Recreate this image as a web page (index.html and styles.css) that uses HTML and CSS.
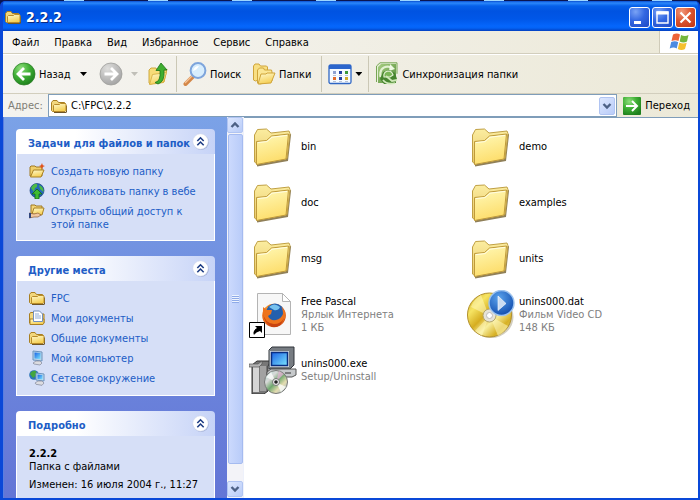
FILE: index.html
```html
<!DOCTYPE html>
<html lang="ru">
<head>
<meta charset="utf-8">
<title>2.2.2</title>
<link rel="stylesheet" href="styles.css">
</head>
<body>
<svg class="defs" aria-hidden="true">
  <defs>
    <linearGradient id="gFolder" x1="0" y1="0" x2="0.4" y2="1"><stop offset="0" stop-color="#fffbd0"/><stop offset="1" stop-color="#f5cf55"/></linearGradient>
    <linearGradient id="gBigFront" x1="0.2" y1="0" x2="0.5" y2="1"><stop offset="0" stop-color="#fff8b4"/><stop offset="1" stop-color="#fddc68"/></linearGradient>
    <linearGradient id="gBigBack" x1="0" y1="0" x2="0" y2="1"><stop offset="0" stop-color="#fbeda0"/><stop offset="1" stop-color="#e9c766"/></linearGradient>
    <radialGradient id="gGreen" cx="0.35" cy="0.25" r="0.8"><stop offset="0" stop-color="#8fdf7c"/><stop offset="0.5" stop-color="#3faf35"/><stop offset="1" stop-color="#1d7f1c"/></radialGradient>
    <radialGradient id="gGrey" cx="0.35" cy="0.25" r="0.8"><stop offset="0" stop-color="#dededc"/><stop offset="1" stop-color="#a3a3a3"/></radialGradient>
    <linearGradient id="gScreen" x1="0" y1="0" x2="1" y2="1"><stop offset="0" stop-color="#1c62e4"/><stop offset="1" stop-color="#7be6ff"/></linearGradient>
    <linearGradient id="gGold" x1="0" y1="0" x2="1" y2="1"><stop offset="0" stop-color="#cda51a"/><stop offset="0.25" stop-color="#f6e463"/><stop offset="0.45" stop-color="#d6ad20"/><stop offset="0.6" stop-color="#f8efa0"/><stop offset="0.78" stop-color="#d7b125"/><stop offset="1" stop-color="#efe27a"/></linearGradient>
    <radialGradient id="gPlay" cx="0.4" cy="0.3" r="0.7"><stop offset="0" stop-color="#5aa2ec"/><stop offset="1" stop-color="#1450b0"/></radialGradient>
    <linearGradient id="gDisc" x1="0" y1="0" x2="1" y2="1"><stop offset="0" stop-color="#a8e0d0"/><stop offset="0.3" stop-color="#d8d8d8"/><stop offset="0.5" stop-color="#6fa86e"/><stop offset="0.7" stop-color="#e4dcb0"/><stop offset="1" stop-color="#8fb6d0"/></linearGradient>
    <radialGradient id="gFox" cx="0.4" cy="0.3" r="0.8"><stop offset="0" stop-color="#ffb732"/><stop offset="0.6" stop-color="#ee6a1a"/><stop offset="1" stop-color="#b93208"/></radialGradient>
    <linearGradient id="gSync" x1="0" y1="0" x2="1" y2="1"><stop offset="0" stop-color="#a9cf84"/><stop offset="1" stop-color="#4f8a34"/></linearGradient>
  </defs>
  <symbol id="folder" viewBox="0 0 16 16">
    <path d="M3 14h12v-7l1 1v6l-1 1H3z" fill="#6d5528"/>
    <path d="M.5 12.500V4.500L2 2.500h4l1.500 2H13.500l1 1v7l-1 1h-12z" fill="#f2d77d" stroke="#a97f22"/>
    <path d="M2.500 13.500v-6l1-1h5l1-1h5l.5 1v6l-1 1z" fill="url(#gFolder)" stroke="#b88b2a"/>
  </symbol>
  <symbol id="big-folder" viewBox="0 0 48 48">
    <path d="M8 43.500l30-5.500L41 12" fill="none" stroke="#7d6a3c" stroke-width="2.200" opacity=".85"/>
    <path d="M5.500 40V13l3-5.500L17.500 7l4.500 4 18-2 1 2.500-3 25L8 42z" fill="url(#gBigBack)" stroke="#c0a044"/>
    <path d="M7.500 42.500v-23L17.500 18.500l5-4.500L39.500 12 37 37z" fill="url(#gBigFront)" stroke="#bf9a3a"/>
    <path d="M8.800 20.600l9.200-1 5-4.400 15-1.800" fill="none" stroke="#fffde4"/>
  </symbol>
  <symbol id="computer" viewBox="0 0 16 16">
    <path d="M4 1l9 1v9l-9-1z" fill="#b6d4ea" stroke="#6c93bd"/>
    <path d="M5.500 2.500l6 .6v6l-6-.6z" fill="url(#gScreen)"/>
    <path d="M7 11h4l2 2-2 2-6-1-1-1z" fill="#dcdce0" stroke="#8c91a3" stroke-width=".8"/>
  </symbol>
  <symbol id="chevrons" viewBox="0 0 16 16">
    <circle cx="8.500" cy="8.500" r="7.300" fill="#8f9fc9"/>
    <circle cx="8" cy="8" r="7.300" fill="#fff" stroke="#ccd4ec" stroke-width=".6"/>
    <path d="M5 7.500l3-3 3 3M5 11.500l3-3 3 3" fill="none" stroke="#1d3c84" stroke-width="1.500"/>
  </symbol>
  <symbol id="down" viewBox="0 0 10 10"><path d="M1.500 3L5 6.500 8.500 3" fill="none" stroke="#4d6185" stroke-width="2.400"/></symbol>
  <symbol id="up" viewBox="0 0 10 10"><path d="M1.500 7L5 3.500 8.500 7" fill="none" stroke="#4d6185" stroke-width="2.400"/></symbol>
</svg>

<div class="window">
  <header class="titlebar">
    <svg class="i16"><use href="#folder"/></svg>
    <h1>2.2.2</h1>
    <div class="controls">
      <button class="ctl" aria-label="Свернуть"><svg viewBox="0 0 19 19"><path d="M4 13h7v3H4z" fill="#fff"/></svg></button>
      <button class="ctl" aria-label="Развернуть"><svg viewBox="0 0 19 19"><path d="M4 4h11v11H4z" fill="none" stroke="#fff" stroke-width="1.400"/><path d="M3.500 3.500h12v3h-12z" fill="#fff"/></svg></button>
      <button class="ctl close" aria-label="Закрыть"><svg viewBox="0 0 19 19"><path d="M4.500 4.500l10 10M14.500 4.500l-10 10" stroke="#fff" stroke-width="2.200"/></svg></button>
    </div>
  </header>

  <nav class="menubar">
    <button>Файл</button><button>Правка</button><button>Вид</button><button>Избранное</button><button>Сервис</button><button>Справка</button>
    <span class="flag"><svg viewBox="0 0 20 18">
      <path d="M4 1.500q4-2 7 0L9.500 8q-3-1.500-7 0z" fill="#ec6337"/>
      <path d="M12 2q4 2 7.500 0L18 8.500q-3.500 1.800-7.300 0z" fill="#74b63c"/>
      <path d="M2.200 9q4-1.600 7 .2L7.700 15.500q-3-2-7 0z" fill="#4d8be0"/>
      <path d="M10.300 9.600q4 1.800 7.400.1L16 16q-3.500 2-7.200 0z" fill="#f5c02f"/></svg></span>
  </nav>

  <div class="toolbar">
    <button class="tool back">
      <svg class="i24" viewBox="0 0 24 24"><circle cx="12" cy="12" r="11" fill="url(#gGreen)" stroke="#2e8129" stroke-width=".8"/><path d="M18.500 12H7M12 6l-6 6 6 6" fill="none" stroke="#fff" stroke-width="2.800"/></svg>
      Назад
    </button>
    <span class="caret"></span>
    <button class="tool fwd" aria-label="Вперед">
      <svg class="i24" viewBox="0 0 24 24"><circle cx="12" cy="12" r="11" fill="url(#gGrey)" stroke="#a0a09c" stroke-width=".8"/><path d="M5.500 12H17M12 6l6 6-6 6" fill="none" stroke="#fff" stroke-width="2.800"/></svg>
    </button>
    <span class="caret off"></span>
    <button class="tool upper" aria-label="Вверх">
      <svg class="i24" viewBox="0 0 24 24"><path d="M3 21V8l2-2h5l1 2h9l1-1-3 13-14 2z" fill="#f7dc78" stroke="#c9a032" stroke-width=".9"/><path d="M3.500 22.500l3-10 14-2-3 10z" fill="url(#gFolder)" stroke="#d3ab3c" stroke-width=".8"/><path d="M9 20.500q6-1 5-12h-4L15 1l6 7h-3q1 12-6 14z" fill="#3fae30" stroke="#1c7319" stroke-width=".8"/></svg>
    </button>
    <span class="sep"></span>
    <button class="tool find">
      <svg class="i24" viewBox="0 0 24 24"><path d="M2.500 22l8-8" stroke="#d48748" stroke-width="4" stroke-linecap="round"/><path d="M2 21l8-8" stroke="#f5c396" stroke-width="1.200"/><circle cx="15" cy="8.500" r="7.400" fill="#d7edfd" stroke="#7ea5dc" stroke-width="2"/><path d="M10 9q1-5 6-5-2 4-6 5z" fill="#fff"/></svg>
      Поиск
    </button>
    <button class="tool folders">
      <svg class="i24" viewBox="0 0 24 24"><path d="M1.500 18V4l1.500-2h4l1.500 2h6l1 1v10l-12 4z" fill="#f8df83" stroke="#d0a53a"/><path d="M5.500 21V8l2-2h4l1 2h7l.5 2v9l-12 3z" fill="#fbe795" stroke="#d0a53a"/><path d="M6 22l3-10h5l1-1h8l-4 10z" fill="url(#gFolder)" stroke="#d0a53a"/></svg>
      Папки
    </button>
    <span class="sep"></span>
    <button class="tool view" aria-label="Вид папки">
      <svg class="i24" viewBox="0 0 24 24"><rect x="1" y="3" width="22" height="18.500" rx="1.500" fill="#f6fbff" stroke="#2e66c4" stroke-width="1.300"/><path d="M1 3h22v4H1z" fill="#2c66cc"/><path d="M5 9h3v3H5z" fill="#8fa2d0"/><path d="M11 9h3v3h-3zM11 15h3v3h-3z" fill="#2544a3"/><path d="M17 9h3v3h-3z" fill="#3a9939"/><path d="M5 15h3v3H5z" fill="#e36d2a"/><path d="M17 15h3v3h-3z" fill="#d1aa29"/><path d="M5 13.500h3M11 13.500h3M17 13.500h3M5 19.500h3M11 19.500h3M17 19.500h3" stroke="#a7b4cb" stroke-width=".8"/></svg>
      <span class="caret"></span>
    </button>
    <span class="sep"></span>
    <button class="tool sync">
      <svg class="i24" viewBox="0 0 24 24"><path d="M5 .8h17v11M1.500 20V4L5 .8" fill="#e3f0d5" stroke="#78a655"/><path d="M3 5l3-3h15v19H3z" fill="url(#gSync)"/><path d="M5.500 15Q4 5 13 4.500l3 1" fill="none" stroke="#e2f1d1" stroke-width="2.200"/><path d="M15 2l5 5-6 2z" fill="#eef8e4"/><path d="M8 10l6-2 6 3 2 6-4 5H9l-4-5z" fill="#47852f"/><path d="M9 15q-1-5 4-6 4 0 5 4l-3 2z" fill="#79b555" stroke="#e2f1d1" stroke-width="1.200"/><path d="M11 14l6 5 5-1M8 18q4 5 12 3" fill="none" stroke="#cfe8b8" stroke-width="1.800"/></svg>
      Синхронизация папки
    </button>
  </div>

  <form class="address">
    <label for="path">Адрес:</label>
    <div class="combo">
      <svg class="i16"><use href="#folder"/></svg>
      <input id="path" type="text" value="C:\FPC\2.2.2">
      <button type="button" class="sbtn drop" aria-label="Список"><svg><use href="#down"/></svg></button>
    </div>
    <button type="button" class="go">
      <svg viewBox="0 0 18 18"><rect width="18" height="18" rx="1" fill="url(#gGreen)"/><path d="M3 9h11M9 4l5 5-5 5" fill="none" stroke="#fff" stroke-width="2"/></svg>
      Переход
    </button>
  </form>

  <div class="body">
    <aside class="side">
      <section class="panel">
        <header><h2>Задачи для файлов и папок</h2><button aria-label="Свернуть раздел"><svg><use href="#chevrons"/></svg></button></header>
        <ul>
          <li><svg class="i16" viewBox="0 0 16 16"><path d="M1 13V4l1-1h4l1 1h6v9z" fill="#f0cf6a" stroke="#a07922"/><path d="M1.500 14l3-7H15l-3 7z" fill="url(#gFolder)" stroke="#a98125"/><path d="M13 0l.8 2.200L16 3l-2.200 1L13 6.500 12 4l-2-1 2-.8z" fill="#e2531c"/></svg><a href="#">Создать новую папку</a></li>
          <li><svg class="i16" viewBox="0 0 16 16"><circle cx="8" cy="7.500" r="7" fill="#2468b8" stroke="#17427c" stroke-width=".7"/><path d="M2 5q3-5 6-4 1 3-2 4l-1 4zM10 2q5 2 4.500 7L11 6z" fill="#4cba45"/><path d="M8 6l5 5h-3v5H6v-5H3z" fill="#3fbb31" stroke="#126718" stroke-width=".8"/></svg><a href="#">Опубликовать папку в вебе</a></li>
          <li><svg class="i16" viewBox="0 0 16 16"><path d="M2 11V2h4l1 1h6v8z" fill="#f3d67b" stroke="#a07922"/><path d="M3 11l2-6h10l-2 7z" fill="url(#gFolder)" stroke="#a98125"/><path d="M0 10l5 1 4-1 3 2-3 2H5l-5 1z" fill="#f1c8a2" stroke="#8b5b34" stroke-width=".7"/><path d="M0 10h2v5H0z" fill="#30467d"/></svg><a href="#">Открыть общий доступ к этой папке</a></li>
        </ul>
      </section>
      <section class="panel">
        <header><h2>Другие места</h2><button aria-label="Свернуть раздел"><svg><use href="#chevrons"/></svg></button></header>
        <ul>
          <li><svg class="i16"><use href="#folder"/></svg><a href="#">FPC</a></li>
          <li><svg class="i16" viewBox="0 0 16 16"><path d="M.5 13V4l1-1.500h4L7 4h8v9z" fill="#f2d77d" stroke="#a97f22"/><path d="M1 14.500V9h14v4l-1 1.500z" fill="url(#gFolder)" stroke="#a97f22"/><path d="M4.500 1h6l3 3v7.500h-9z" fill="#fff" stroke="#7390bd"/><path d="M6 4h4M6 6h6M6 8h6" stroke="#8eabd6"/></svg><a href="#">Мои документы</a></li>
          <li><svg class="i16"><use href="#folder"/></svg><a href="#">Общие документы</a></li>
          <li><svg class="i16"><use href="#computer"/></svg><a href="#">Мой компьютер</a></li>
          <li><svg class="i16" viewBox="0 0 16 16"><circle cx="5" cy="5" r="4.800" fill="#2c74b8"/><path d="M1 4q2-4 6-3l1 4-4 3z" fill="#43a640"/><path d="M7 3l8 1v7l-8-1z" fill="#c2ddf0" stroke="#6c93bd"/><path d="M8.500 4.500l5 .6v4.500l-5-.6z" fill="url(#gScreen)"/><path d="M9 11h4l2 2-2 2.300-6-1-1-1.300z" fill="#dcdce0" stroke="#8c91a3" stroke-width=".8"/></svg><a href="#">Сетевое окружение</a></li>
        </ul>
      </section>
      <section class="panel">
        <header><h2>Подробно</h2><button aria-label="Свернуть раздел"><svg><use href="#chevrons"/></svg></button></header>
        <div class="details"><b>2.2.2</b><p>Папка с файлами</p><p class="date">Изменен: 16 июля 2004 г., 11:27</p></div>
      </section>
    </aside>
    <div class="scroll">
      <button class="sbtn" aria-label="Вверх"><svg><use href="#up"/></svg></button>
      <div class="thumb"><span class="grip"></span></div>
      <button class="sbtn" aria-label="Вниз"><svg><use href="#down"/></svg></button>
    </div>
    <main class="files">
      <article class="file"><svg><use href="#big-folder"/></svg><p>bin</p></article>
      <article class="file"><svg><use href="#big-folder"/></svg><p>demo</p></article>
      <article class="file"><svg><use href="#big-folder"/></svg><p>doc</p></article>
      <article class="file"><svg><use href="#big-folder"/></svg><p>examples</p></article>
      <article class="file"><svg><use href="#big-folder"/></svg><p>msg</p></article>
      <article class="file"><svg><use href="#big-folder"/></svg><p>units</p></article>
      <article class="file">
        <svg viewBox="0 0 48 48"><path d="M8.500 3.500h25l8 8v33h-33z" fill="#f7f7f7" stroke="#b4b4b4"/><path d="M33.500 3.500v8h8z" fill="#fff" stroke="#b4b4b4"/><circle cx="25" cy="25.500" r="11.800" fill="url(#gFox)"/><circle cx="26" cy="22.500" r="9" fill="#2460ae"/><path d="M20 17q5-5 11 0-2 4-6 3z" fill="#76c1ee"/><path d="M14 17l4 3 5 0-1 4-3 2q2 5 8 4 5-1 7-6 0-5-2-7 6 4 4 11-3 9-12 8-9-1-10-9z" fill="#ee741d"/><path d="M14 22q1 11 11 12 7 0 10-6-3 10-11 9-9-2-10-15z" fill="#c84411"/><path d="M.5 32.500h15v15H.5z" fill="#fff" stroke="#000"/><path d="M5 45q-2-4 3-7L6 36h7v7l-2-2q-4 1-6 4z" fill="#000"/></svg>
        <div><p>Free Pascal</p><small>Ярлык Интернета</small><small>1 КБ</small></div>
      </article>
      <article class="file">
        <svg viewBox="0 0 48 48"><ellipse cx="24" cy="27" rx="22.500" ry="21" fill="#8b8260" opacity=".4"/><circle cx="22.500" cy="25" r="22" fill="url(#gGold)" stroke="#b18f2a"/><path d="M22 26L4 17q3-8 10-12zM23 26l18 10q-4 7-10 10zM22 26l-7 20-7-5z" fill="#fff7ba" opacity=".55"/><circle cx="22.500" cy="25.500" r="6.500" fill="#e6e3d8" stroke="#b3a66e"/><circle cx="22.500" cy="25.500" r="3" fill="#fff" stroke="#bbb"/><circle cx="34.500" cy="13" r="12.500" fill="url(#gPlay)" stroke="#9dc3ee" stroke-width="1.500"/><path d="M31 6l8 7.500-8 7z" fill="#cbdcf1" stroke="#fff" stroke-width=".6"/></svg>
        <div><p>unins000.dat</p><small>Фильм Video CD</small><small>148 КБ</small></div>
      </article>
      <article class="file">
        <svg viewBox="0 0 48 48"><path d="M3 19l5-4h14l-3 5v25l-4 3H3z" fill="#777" stroke="#333"/><path d="M4 21h6v25H4z" fill="#d5d5d5"/><path d="M11 20h6v25h-6z" fill="#a2a2a2"/><path d="M0 18h9l4-3v3l-3 3H0z" fill="#b5b5b5" stroke="#555" stroke-width=".7"/><path d="M20 4l3-3h22v18l-4 4H20z" fill="#777c82" stroke="#30343a"/><path d="M20.500 4.500h20v17h-20z" fill="#d9dde0" stroke="#757b80"/><path d="M22.500 6.500h16v13h-16z" fill="url(#gScreen)" stroke="#092e82" stroke-width="1.500"/><path d="M18 26l4-3h25v6l-4 2H18z" fill="#c6c9cb" stroke="#555"/><path d="M36 27h6" stroke="#333"/><circle cx="27" cy="36" r="11.500" fill="url(#gDisc)" stroke="#777"/><path d="M27 36l-10-5 5-5zM27 36l10 5-5 5z" fill="#fff" opacity=".75"/><path d="M27 36l3-11 5 3z" fill="#e8b1d7" opacity=".7"/><circle cx="27" cy="36" r="3.500" fill="#eee" stroke="#777"/><circle cx="27" cy="36" r="1.800" fill="#222"/></svg>
        <div><p>unins000.exe</p><small>Setup/Uninstall</small></div>
      </article>
    </main>
  </div>
</div>
</body>
</html>
```
FILE: styles.css
```css
* { box-sizing: border-box; }
html, body { height: 100%; }
body {
  margin: 0;
  padding-top: 1px;
  background: repeating-linear-gradient(90deg, #0a1550 0 64px, #9cd6ff 64px 84px);
  font: 11px/13px "DejaVu Sans Condensed", Tahoma, sans-serif;
  color: #000;
  overflow: hidden;
}
h1, h2, p, ul { margin: 0; padding: 0; }
button { font: inherit; color: inherit; background: none; border: 0; padding: 0; margin: 0; }
svg { flex: none; display: block; }
.defs { position: absolute; width: 0; height: 0; }
.i16 { width: 16px; height: 16px; }
.i24 { width: 24px; height: 24px; }

.window {
  height: 100%;
  display: flex;
  flex-direction: column;
  border: solid #0a48d8;
  border-width: 0 2px 2px 3px;
  border-radius: 5px 5px 0 0;
  overflow: hidden;
  background: #0a48d8;
}

.titlebar {
  flex: none;
  height: 30px;
  display: flex;
  align-items: center;
  gap: 5px;
  padding: 2px 2px 0;
  background: linear-gradient(#0a4fd2 0, #2b88fb 2px, #0560ea 5px, #0053e1 10px, #0057e8 18px, #0566fc 25px, #0463f6 27px, #0340c0 30px);
}
.titlebar h1 {
  font: bold 14px/16px "DejaVu Sans Condensed", Tahoma, sans-serif;
  color: #fff;
  text-shadow: 1px 1px #0a2a80;
}
.controls { display: flex; gap: 2px; margin-left: auto; }
.ctl {
  width: 21px;
  height: 21px;
  border: 1px solid #fff;
  border-radius: 3px;
  background: radial-gradient(circle at 30% 20%, #7aa3f5, #3367e2 45%, #1d49c4);
}
.ctl.close { background: radial-gradient(circle at 30% 20%, #f0997c, #dd5530 45%, #bf3411); }
.ctl svg { width: 19px; height: 19px; }

.menubar {
  flex: none;
  height: 23px;
  display: flex;
  align-items: center;
  gap: 15px;
  padding-left: 9px;
  background: linear-gradient(90deg, #f6f5f3, #ece9d8);
  border-bottom: 1px solid #d2cebd;
}
.flag {
  align-self: stretch;
  width: 39px;
  margin-left: auto;
  display: flex;
  align-items: center;
  justify-content: center;
  background: #fff;
  border-left: 1px solid #cfcbb9;
}
.flag svg { width: 20px; height: 18px; }

.toolbar {
  flex: none;
  height: 40px;
  display: flex;
  align-items: center;
  padding-left: 9px;
  background: linear-gradient(90deg, #f5f4f1, #ece9d8);
  border-top: 1px solid #fff;
  border-bottom: 1px solid #d2cebd;
}
.tool { display: flex; align-items: center; gap: 3px; white-space: nowrap; }
.back { width: 68px; }
.fwd { margin-left: 12px; }
.upper { margin-left: 8px; }
.find { width: 69px; }
.folders { margin-right: 4px; }
.caret {
  flex: none;
  width: 7px;
  height: 4px;
  background: #000;
  clip-path: polygon(0 0, 100% 0, 50% 100%);
}
.off { margin-left: 8px; background: #c0bfb8; }
.sep { flex: none; width: 1px; height: 36px; margin: 0 6px; background: #cbc8b6; }

.address {
  flex: none;
  height: 23px;
  display: flex;
  align-items: center;
  padding: 0 8px 0 5px;
  background: linear-gradient(90deg, #f4f3ef, #ece9d8);
}
.address label { width: 40px; color: #7f7d75; }
.combo {
  flex: 1;
  align-self: stretch;
  display: flex;
  align-items: center;
  gap: 4px;
  padding: 1px 1px 1px 2px;
  background: #fff;
  border: 1px solid #7f9db9;
}
.combo input { flex: 1; min-width: 0; border: 0; padding: 0; font: inherit; color: #000; background: none; outline: 0; }
.go { display: flex; align-items: center; gap: 4px; margin-left: 6px; }
.go svg { width: 18px; height: 18px; }
.sbtn {
  flex: none;
  width: 16px;
  height: 16px;
  display: flex;
  align-items: center;
  justify-content: center;
  border: 1px solid #b0c4f2;
  border-radius: 2px;
  background: linear-gradient(135deg, #dde7fe, #b9ccf8);
}
.sbtn svg { width: 10px; height: 10px; }
.drop { height: 18px; }

.body { flex: 1; min-height: 0; display: flex; background: #fff; border-left: 1px solid #5b7fe0; }
.side {
  flex: none;
  width: 223px;
  display: flex;
  flex-direction: column;
  gap: 15px;
  padding: 12px 12px 0;
  background: linear-gradient(#7ba2e7, #6375d6);
  overflow: hidden;
}
.panel { flex: none; }
.panel header {
  height: 25px;
  display: flex;
  align-items: center;
  justify-content: space-between;
  padding: 0 6px 0 12px;
  border-radius: 4px 4px 0 0;
  background: linear-gradient(90deg, #fff 30%, #c6d3f7);
}
.panel h2 { font-size: 11px; line-height: 13px; color: #215dc6; padding-top: 3px; white-space: nowrap; }
.panel header button svg { width: 17px; height: 17px; }
.panel ul, .details { border: 1px solid #fff; border-top: 0; background: #d6dff7; }
.panel ul {
  list-style: none;
  display: flex;
  flex-direction: column;
  gap: 4px;
  padding: 9px 12px;
}
.panel li { display: flex; gap: 6px; min-height: 16px; }
.panel a { color: #215dc6; text-decoration: none; padding-top: 2px; }
.details { padding: 11px 12px 12px; }
.date { margin-top: 5px; white-space: nowrap; }

.scroll {
  flex: none;
  width: 17px;
  display: flex;
  flex-direction: column;
  align-items: center;
  padding-bottom: 1px;
  background: #f3f3f8;
  border-right: 1px solid #eef1fb;
}
.thumb {
  width: 15px;
  height: 330px;
  flex: 0 1 330px;
  margin: 1px 0 auto;
  display: flex;
  align-items: center;
  justify-content: center;
  border: 1px solid #a5bbf0;
  border-radius: 2px;
  background: linear-gradient(90deg, #cbd9fd, #b9ccf9);
}
.grip { width: 7px; height: 8px; background: repeating-linear-gradient(#eef4fe 0 1px, #8eaae8 1px 2px); }

.files {
  flex: 1;
  display: grid;
  grid-template-columns: repeat(auto-fill, 218px);
  grid-auto-rows: 48px;
  row-gap: 8px;
  padding: 4px 0 0 5px;
  border-top: 1px solid #7f9db9;
  align-content: start;
}
.file { display: flex; align-items: center; gap: 4px; }
.file svg { width: 48px; height: 48px; }
.file small { display: block; font-size: 11px; color: #808080; }
```
